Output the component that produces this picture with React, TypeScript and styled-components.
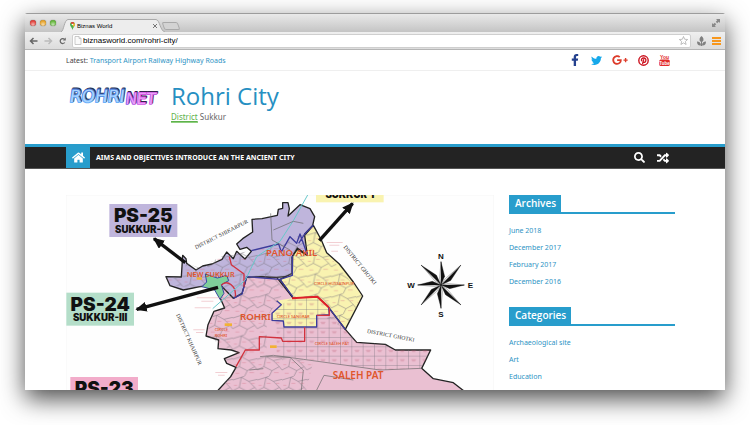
import React from "react";
import styled, { createGlobalStyle } from "styled-components";
import { FaFacebookF, FaTwitter, FaGooglePlusG, FaSearch, FaRandom, FaHome } from "react-icons/fa";

const BLUE = "#289dcc";

const GlobalStyle = createGlobalStyle`
  *, *::before, *::after { box-sizing: border-box; }
  body { margin: 0; background: #fff; font-family: "Noto Sans", "Open Sans", sans-serif; }
  a { color: inherit; text-decoration: none; }
  button { padding: 0; border: 0; background: none; color: inherit; font: inherit; cursor: pointer; }
  ul { list-style: none; margin: 0; padding: 0; }
  h1, h2, p { margin: 0; }
  svg { display: block; }
`;

const Desktop = styled.div`
  height: 100vh;
  padding: 13px 25px 35px;
  overflow: hidden;
`;

const BrowserWindow = styled.div`
  display: flex;
  flex-direction: column;
  height: 100%;
  overflow: hidden;
  background: #fff;
  border-radius: 2px 2px 0 0;
  box-shadow: 0 9px 24px rgba(0, 0, 0, 0.7);
`;

const TabStrip = styled.div`
  flex: none;
  display: flex;
  align-items: flex-end;
  height: 19px;
  padding: 0 5px;
  border-top: 1px solid #9c9c9c;
  background: linear-gradient(#e9e9e9, #c4c4c4);
`;

const Lights = styled.div`
  display: flex;
  gap: 4px;
  align-self: center;
  width: 31px;
`;

const Light = styled.button<{ $color: string }>`
  && {
    width: 6px;
    height: 6px;
    border-radius: 50%;
    background: radial-gradient(circle at 50% 75%, #fff9, transparent 60%), ${(p) => p.$color};
    box-shadow: 0 0 1px #444;
  }
`;

const TabShape = styled.div`
  display: grid;
  width: 104px;
  height: 13px;
  > * { grid-area: 1 / 1; }
`;

const TabContent = styled.div`
  display: flex;
  align-items: center;
  gap: 2px;
  padding: 0 8px 0 9px;
  font: 6px "Liberation Sans", Arial, sans-serif;
  color: #000;
`;

const TabTitle = styled.span`
  flex: 1;
  white-space: nowrap;
`;

const NewTab = styled.button`
  && {
    width: 16px;
    height: 8px;
    margin: 0 0 2px -2px;
    border: 1px solid #a9a9a9;
    border-radius: 2px;
    background: #d3d3d3;
    transform: skewX(20deg);
  }
`;

const Expand = styled.button`
  && { margin: 0 0 5px auto; color: #888; }
`;

const Toolbar = styled.div`
  flex: none;
  display: flex;
  align-items: center;
  gap: 6px;
  height: 18px;
  padding: 0 4px;
  border-bottom: 1px solid #b5b5b5;
  background: linear-gradient(#efefef, #dcdcdc);
  color: #666;
`;

const Address = styled.label`
  flex: 1;
  display: flex;
  align-items: center;
  gap: 1px;
  height: 14px;
  padding: 0 2px 0 1px;
  border: 1px solid #cfcfcf;
  border-radius: 2px;
  background: #fff;
`;

const AddressInput = styled.input`
  flex: 1;
  min-width: 0;
  padding: 0;
  border: 0;
  outline: 0;
  background: none;
  font: 8px "Liberation Sans", Arial, sans-serif;
  color: #000;
`;

const Page = styled.div`
  flex: 1;
  min-height: 0;
  overflow: hidden;
`;

const Inner = styled.div`
  display: flex;
  padding: 0 50px 0 41px;
`;

const TopBar = styled.div`
  border-bottom: 1px solid #efefef;
`;

const TopInner = styled(Inner)`
  align-items: center;
  justify-content: space-between;
  height: 20px;
  padding-right: 55px;
  font-size: 7px;
  color: #444;
`;

const BlueLink = styled.a`
  color: #2d93c4;
`;

const Social = styled.ul`
  display: flex;
  align-items: center;
  gap: 10px;
`;

const SocialLink = styled.a<{ $color: string }>`
  display: block;
  color: ${(p) => p.$color};
`;

const Branding = styled(Inner)`
  gap: 11px;
  height: 73px;
  padding-top: 10px;
`;

const SiteName = styled.h1`
  font-family: "Open Sans", sans-serif;
  font-size: 24px;
  line-height: 30px;
  font-weight: 400;
  color: #268fc2;
`;

const Tagline = styled.p`
  font-size: 8px;
  line-height: 11px;
  color: #666;
`;

const Marked = styled.a`
  display: inline-block;
  color: #5fb14c;
  text-decoration: underline;
  border-bottom: 1px solid #8fd07f;
`;

const Nav = styled.nav`
  border-top: 3px solid ${BLUE};
  border-bottom: 1px solid #555;
  background: #232323;
  color: #fff;
`;

const NavInner = styled(Inner)`
  align-items: stretch;
  height: 21px;
`;

const HomeLink = styled.a`
  display: grid;
  place-items: center;
  width: 24px;
  background: ${BLUE};
`;

const NavLink = styled.a`
  align-self: center;
  padding-left: 6px;
  font-size: 7px;
  font-weight: 700;
  white-space: nowrap;
`;

const NavTools = styled.div`
  display: flex;
  align-items: center;
  gap: 12px;
  margin-left: auto;
  padding-right: 6px;
`;

const Body = styled(Inner)`
  gap: 15px;
  padding-top: 26px;
`;

const Main = styled.main`
  flex: 1;
  min-width: 0;
`;

const Sidebar = styled.aside`
  flex: none;
  width: 166px;
`;

const Widget = styled.section`
  margin-bottom: 17px;
`;

const WidgetHead = styled.div`
  display: flex;
  margin-bottom: 8px;
  border-bottom: 2px solid ${BLUE};
`;

const WidgetTitle = styled.h2`
  padding: 0 5px 0 6px;
  background: ${BLUE};
  color: #fff;
  font-family: "Open Sans", sans-serif;
  font-size: 10px;
  line-height: 17px;
  font-weight: 600;
`;

const WidgetItem = styled.li`
  font-size: 7px;
  line-height: 17px;
  height: 17px;
  color: #2d93c4;
`;

const widgets = [
  { title: "Archives", items: ["June 2018", "December 2017", "February 2017", "December 2016"] },
  { title: "Categories", items: ["Archaeological site", "Art", "Education", "Events in Sukkur"] },
];

const Pinterest = () => (
  <svg width="11" height="11" viewBox="0 0 22 22" fill="none" stroke="currentColor">
    <circle cx="11" cy="11" r="9.4" strokeWidth="2.8" />
    <path d="M7.5 12.5C5.5 9 8 6 11.5 6s5 3 4 6-4 3.500-5 1.500M11.500 8.500 9 18" strokeWidth="2.600" />
  </svg>
);

const YouTube = () => (
  <svg width="11" height="12" viewBox="0 0 22 24" fontFamily="Liberation Sans, sans-serif" fontWeight="700" textAnchor="middle">
    <text x="11" y="9" fontSize="10" fill="currentColor">You</text>
    <rect x="0.500" y="11" width="21" height="13" rx="3" fill="currentColor" />
    <text x="11" y="21" fontSize="9" fill="#fff">Tube</text>
  </svg>
);

const Logo = () => (
  <svg width="94" height="30" viewBox="0 0 282 90" role="img" aria-label="Rohri.net" fontFamily="DejaVu Sans, sans-serif" strokeLinejoin="round">
    <defs>
      <linearGradient id="logoBlue" x1="0" y1="0" x2="0" y2="1">
        <stop offset="0.200" stopColor="#4a78d4" />
        <stop offset="0.800" stopColor="#6cb0f8" />
      </linearGradient>
      <linearGradient id="logoPink" x1="0" y1="0" x2="1" y2="0">
        <stop offset="0" stopColor="#7a50e8" />
        <stop offset="0.500" stopColor="#d850e4" />
        <stop offset="1" stopColor="#c05ae0" />
      </linearGradient>
    </defs>
    <g transform="skewX(-8)" fontSize="51">
      <text x="20" y="60" fill="none" stroke="#26304e" strokeWidth="6">ROHRI</text>
      <text x="18" y="64" fill="none" stroke="url(#logoBlue)" strokeWidth="6">ROHRI</text>
      <text x="18" y="64" fill="#a8d4ff">ROHRI</text>
    </g>
    <g transform="skewX(-6)" fontSize="46">
      <text x="186" y="65" fill="none" stroke="#35204c" strokeWidth="5">NET</text>
      <text x="184" y="69" fill="none" stroke="url(#logoPink)" strokeWidth="5">NET</text>
      <text x="184" y="69" fill="#e9a0f6">NET</text>
    </g>
  </svg>
);

const PINK = "#eac0d2";
const LILAC = "#bfb5dc";
const CREAM = "#f9f3b0";

const Label = ({ x, y, w, color, title, sub }: { x: number; y: number; w: number; color: string; title: string; sub: string }) => (
  <g textAnchor="middle" fill="#111" fontFamily="Inter, Arial, sans-serif" fontWeight="900">
    <rect x={x} y={y} width={w} height="99" fill={color} />
    <text x={x + w / 2} y={y + 55} fontSize="57">{title}</text>
    <text x={x + w / 2} y={y + 86} fontSize="29">{sub}</text>
  </g>
);

const compassPoints = [0, 45, 90, 135, 180, 225, 270, 315];

const DistrictMap = () => (
  <svg width="100%" viewBox="18 15 1284 660" role="img" aria-label="Constituency map of Sukkur district">
    <defs>
      <pattern id="plots" width="74" height="62" patternUnits="userSpaceOnUse">
        <path d="M0 12 26 4 48 16 74 10M26 4 20 34 0 44M20 34 44 46 66 34 74 44M48 16 66 34M44 46 36 62M36 0 26 4" fill="none" stroke="#77727c" strokeWidth="1.500" />
        <path d="M28 22h12M4 28h9M50 52h14M8 54h12M56 22h10" stroke="#d06a80" strokeWidth="1.500" opacity="0.700" />
      </pattern>
      <pattern id="grid" x="772" y="357" width="34" height="28" patternUnits="userSpaceOnUse">
        <path d="M0 0H34M0 0V28" fill="none" stroke="#77727c" strokeWidth="2" />
        <path d="M10 12h14M12 16h10" stroke="#c06078" strokeWidth="1.500" opacity="0.700" />
      </pattern>
      <marker id="tip" markerUnits="userSpaceOnUse" markerWidth="36" markerHeight="30" refX="30" refY="15" orient="auto">
        <path d="M0 0 34 15 0 30Z" fill="#111" />
      </marker>
    </defs>
    <rect x="18" y="15" width="1284" height="660" fill="#fefefe" stroke="#f5f5f5" strokeWidth="3" />

    <g stroke="#222" strokeWidth="4" strokeLinejoin="round">
      <path fill={PINK} d="M468 296 494 354 462 364 444 404 438 438 476 450 474 476 514 480 537 488 493 506 500 520 528 532 512 560 475 600V680H1302V640L1208 600 1180 578 1120 566 1085 535 1112 480 1006 480 976 463 890 457 856 418 806 352 700 325 650 262 560 258Z" />
      <path fill={LILAC} d="M318 260 364 261 368 196 378 206 380 220 408 240 428 228 456 222 486 208 500 186 520 206 530 184 555 207 574 184 560 172 540 178 530 162 548 146 578 126 576 88 606 86 652 76 655 58 668 55 668 38 684 38 688 56 684 78 720 44 750 56 764 80 758 106 734 132 746 170 742 196 712 174 696 202 697 258 650 262 600 260 560 262 546 310 520 325 482 286 446 288 420 290 370 300 330 287Z" />
      <path fill={CREAM} d="M760 106 784 150 800 188 838 222 880 276 908 318 856 418 806 352 772 320 700 325 680 296 660 268 697 250 698 198 712 178 742 196 734 136Z" />
    </g>
    <path fill="url(#plots)" d="M318 260 364 261 380 220 420 234 500 190 574 184 697 150 760 106 800 188 908 318 856 418 700 325 680 296 620 380 620 500 760 512 740 600 475 600 528 532 493 506 514 480 438 438 462 364 494 354 468 296 330 287Z" />
    <path fill={CREAM} d="M700 324 772 320 806 352 808 374 770 376 770 411 672 411 670 393 636 391 636 370 664 344 650 332Z" />
    <path fill="url(#grid)" d="M690 326 772 320 806 352 856 418 890 457 976 463 1006 480 1112 480 1085 535 960 540 730 506 650 500 650 412 636 391 636 370 664 344Z" />
    <path fill="#7fd09a" stroke="#3448a0" strokeWidth="3" d="M436 252 472 264 500 256 506 272 484 284 492 310 480 328 464 300 426 290 440 276Z" />
    <g fill="none" strokeLinejoin="round" strokeWidth="4">
      <path stroke="#3d3c9c" d="M574 182 656 162 664 186 690 140 710 160 720 132 742 194M697 198 697 256 660 268 560 260 546 312 520 325M660 268 698 320M650 332 664 344 636 370 636 391 670 393 672 411 770 411 770 376 808 374 806 352 856 418M716 160 734 132 760 106" />
      <path stroke="#d2323e" d="M508 200 514 224 552 252 552 290M484 286C500 268 530 286 526 320M528 530 556 480H598V440L664 444 668 454H734V412M770 376H808V352" />
      <path stroke="#e02028" strokeWidth="6" d="M696 325 772 320 806 352" />
      <path stroke="#68c8ca" strokeWidth="3" d="M743 15 700 92 660 154 590 200 556 270 458 356" />
      <path stroke="#666" strokeWidth="2" d="M600 500 640 496 730 508 960 540 1085 535M770 600 792 556 880 570M568 540 610 536M620 500 690 502 730 540 724 600M632 70 636 150 690 180M640 120 700 94 730 100" />
    </g>

    <g stroke="#111" strokeWidth="10">
      <path d="M376 218 282 146" markerEnd="url(#tip)" />
      <path d="M474 292 230 358" markerEnd="url(#tip)" />
      <path d="M778 152 878 40" markerEnd="url(#tip)" />
      <path d="M340 634 240 606" />
    </g>

    <g fill="#e0562c" fontFamily="Noto Sans, sans-serif" fontWeight="600">
      <text x="618" y="197" fontSize="29">PANO AKIL</text>
      <text x="380" y="262" fontSize="22">NEW SUKKUR</text>
      <text x="540" y="389" fontSize="29">ROHRI</text>
      <text x="818" y="567" fontSize="30">SALEH PAT</text>
      <g fontSize="12" fontWeight="500">
        <text x="762" y="285">CIRCLE HUSSAINPUR</text>
        <text x="650" y="385">CIRCLE SANGRAR</text>
        <text x="764" y="466">CIRCLE SALEH PAT</text>
        <text x="464" y="424">CIRCLE</text>
        <text x="464" y="442">ROHRI</text>
      </g>
    </g>
    <g fill="#f2b233">
      <rect x="494" y="400" width="22" height="8" />
      <rect x="630" y="466" width="20" height="8" />
      <rect x="410" y="262" width="16" height="7" />
    </g>
    <g fill="#e08a94" opacity="0.400">
      <path d="M410 322h70v3h-70ZM424 332h36v3h-36ZM404 352h48v3h-48ZM400 418h34v3h-34ZM408 426h22v3h-22ZM466 546h36v3h-36ZM474 554h20v3h-20ZM800 156h48v3h-48ZM808 164h30v3h-30ZM814 182h20v3h-20Z" />
    </g>
    <g fill="#333" fontFamily="Liberation Serif, serif" fontSize="17">
      <text transform="translate(408 178) rotate(-27)">DISTRICT SHIKARPUR</text>
      <text transform="translate(850 172) rotate(51)">DISTRICT GHOTKI</text>
      <text transform="translate(348 374) rotate(66)">DISTRICT KHAIRPUR</text>
      <text transform="translate(920 428) rotate(11)">DISTRICT GHOTKI</text>
    </g>

    <Label x={148} y={42} w={204} color={LILAC} title="PS-25" sub="SUKKUR-IV" />
    <Label x={19} y={308} w={203} color="#b4dec9" title="PS-24" sub="SUKKUR-III" />
    <Label x={31} y={561} w={203} color="#f2acca" title="PS-23" sub="SUKKUR-II" />
    <Label x={768} y={-62} w={203} color={CREAM} title="PS-22" sub="SUKKUR-I" />

    <g transform="translate(1143 285)">
      {compassPoints.map((angle) => (
        <g key={angle} transform={`rotate(${angle})`} stroke="#111" strokeWidth="1">
          <path d={angle % 90 ? "M0 0V-34L0-84 11-30Z" : "M0 0V-34L0-70 11-26Z"} fill="#111" />
          <path d={angle % 90 ? "M0 0V-84L-4-22Z" : "M0 0V-70L-4-20Z"} fill="#fff" />
        </g>
      ))}
      <g fontFamily="Liberation Sans, Arial, sans-serif" fontWeight="700" fontSize="24" textAnchor="middle" fill="#111">
        <text x="0" y="-78">N</text>
        <text x="0" y="95">S</text>
        <text x="-90" y="8">W</text>
        <text x="88" y="8">E</text>
      </g>
    </g>
  </svg>
);

const Arrow = ({ label, faded, back }: { label: string; faded?: boolean; back?: boolean }) => (
  <button aria-label={label}>
    <svg width="9" height="8" viewBox="0 0 18 16" fill="none" stroke={faded ? "#bbb" : "#666"} strokeWidth="3">
      <path d={back ? "M17 8H3M9 2 3 8l6 6" : "M1 8h14M9 2l6 6-6 6"} />
    </svg>
  </button>
);

export default function App() {
  return (
    <>
      <GlobalStyle />
      <Desktop>
        <BrowserWindow>
          <TabStrip>
            <Lights>
              <Light $color="#e2453f" aria-label="Close window" />
              <Light $color="#e8a52d" aria-label="Minimize" />
              <Light $color="#68b840" aria-label="Zoom" />
            </Lights>
            <TabShape>
              <svg width="104" height="13" viewBox="0 0 104 13">
                <path d="M0 13C3 12 3 1 7 .5H95C99 1 99 12 104 13" fill="#ededed" stroke="#aaa" />
              </svg>
              <TabContent>
                <svg width="5" height="8" viewBox="0 0 10 16">
                  <path d="M5 16C4 11 0 9 0 5a5 5 0 0 1 10 0c0 4-4 6-5 11Z" fill="#4caf50" />
                  <path d="M5 5 1 2a5 5 0 0 1 8 0Z" fill="#e0402f" />
                  <path d="M5 5 9 2c2 4 0 6-2 8Z" fill="#f4b92d" />
                  <circle cx="5" cy="5" r="1.600" fill="#fff" />
                </svg>
                <TabTitle>Biznas World</TabTitle>
                <button aria-label="Close tab">
                  <svg width="4" height="4" viewBox="0 0 4 4" stroke="#777"><path d="M0 0 4 4M4 0 0 4" /></svg>
                </button>
              </TabContent>
            </TabShape>
            <NewTab aria-label="New tab" />
            <Expand aria-label="Full screen">
              <svg width="8" height="8" viewBox="0 0 16 16" fill="currentColor">
                <path d="M8 0h8v8l-2.500-2.500-3 3-3-3 3-3ZM0 8l2.500 2.500 3-3 3 3-3 3L8 16H0Z" />
              </svg>
            </Expand>
          </TabStrip>
          <Toolbar>
            <Arrow label="Back" back />
            <Arrow label="Forward" faded />
            <button aria-label="Reload">
              <svg width="7" height="8" viewBox="0 0 14 16" fill="none" stroke="#666" strokeWidth="2.500">
                <path d="M11.500 11A5 5 0 1 1 11 4.500" />
                <path d="M13.500 1v6H8Z" fill="#666" stroke="none" />
              </svg>
            </button>
            <Address>
              <svg width="8" height="9" viewBox="0 0 16 18" fill="#fafafa" stroke="#bbb" strokeWidth="1.500">
                <path d="M2 1h8l4 4v12H2ZM10 1v4h4" />
              </svg>
              <AddressInput aria-label="Address" defaultValue="biznasworld.com/rohri-city/" />
              <svg width="9" height="9" viewBox="0 0 18 18" fill="#fff" stroke="#aaa" strokeWidth="1.500">
                <path d="m9 1 2.300 5.500 6 .5-4.600 4 1.500 6L9 13.800 3.800 17l1.500-6L.7 7l6-.5Z" />
              </svg>
            </Address>
            <button aria-label="Extension">
              <svg width="9" height="10" viewBox="0 0 18 20" fill="#808080">
                <path d="M9 0c4 3 5 7 3 11H6C4 7 5 3 9 0ZM8 9h2v11H8Z" />
                <path d="M8 19C3 20 0 17 0 11c5 0 8 3 8 8ZM10 19c5 1 8-2 8-8-5 0-8 3-8 8Z" />
              </svg>
            </button>
            <button aria-label="Menu">
              <svg width="9" height="8" viewBox="0 0 9 8" fill="#f7971d"><path d="M0 0h9v2H0ZM0 3h9v2H0ZM0 6h9v2H0Z" /></svg>
            </button>
          </Toolbar>
          <Page>
            <TopBar>
              <TopInner>
                <p>Latest: <BlueLink href="#latest">Transport Airport Railway Highway Roads</BlueLink></p>
                <Social>
                  <li><SocialLink $color="#24418e" href="#facebook" aria-label="Facebook"><FaFacebookF size={12} /></SocialLink></li>
                  <li><SocialLink $color="#15a8ea" href="#twitter" aria-label="Twitter"><FaTwitter size={11} /></SocialLink></li>
                  <li><SocialLink $color="#dd3c2b" href="#google" aria-label="Google Plus"><FaGooglePlusG size={16} /></SocialLink></li>
                  <li><SocialLink $color="#cc1420" href="#pinterest" aria-label="Pinterest"><Pinterest /></SocialLink></li>
                  <li><SocialLink $color="#e22b2b" href="#youtube" aria-label="YouTube"><YouTube /></SocialLink></li>
                </Social>
              </TopInner>
            </TopBar>
            <Branding as="header">
              <a href="#home" aria-label="Rohri.net"><Logo /></a>
              <div>
                <SiteName>Rohri City</SiteName>
                <Tagline><Marked href="#district">District</Marked> Sukkur</Tagline>
              </div>
            </Branding>
            <Nav>
              <NavInner>
                <HomeLink href="#home" aria-label="Home"><FaHome size={13} /></HomeLink>
                <NavLink href="#aims">AIMS AND OBJECTIVES INTRODUCE AN THE ANCIENT CITY</NavLink>
                <NavTools>
                  <button aria-label="Search"><FaSearch size={11} /></button>
                  <button aria-label="Random post"><FaRandom size={12} /></button>
                </NavTools>
              </NavInner>
            </Nav>
            <Body>
              <Main><DistrictMap /></Main>
              <Sidebar>
                {widgets.map((w) => (
                  <Widget key={w.title}>
                    <WidgetHead><WidgetTitle>{w.title}</WidgetTitle></WidgetHead>
                    <ul>
                      {w.items.map((item) => (
                        <WidgetItem key={item}><a href="#post">{item}</a></WidgetItem>
                      ))}
                    </ul>
                  </Widget>
                ))}
              </Sidebar>
            </Body>
          </Page>
        </BrowserWindow>
      </Desktop>
    </>
  );
}
